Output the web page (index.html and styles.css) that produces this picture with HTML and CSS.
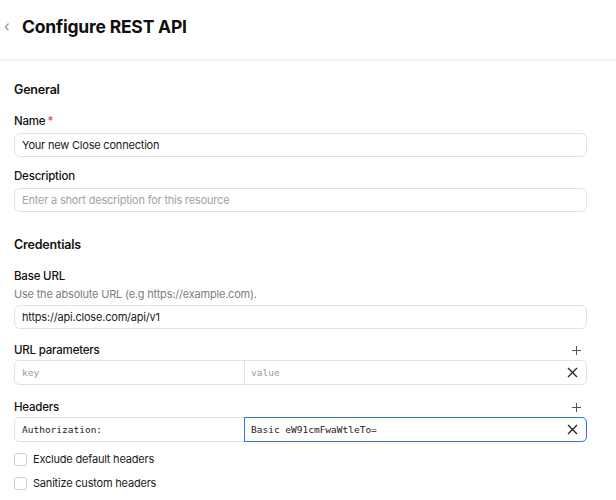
FILE: index.html
```html
<!DOCTYPE html>
<html>
<head>
<meta charset="utf-8">
<link rel="stylesheet" href="styles.css">
</head>
<body>
<header class="topbar">
  <svg class="back" width="8" height="10" viewBox="0 0 8 10"><path d="M5.5 1.5 L2.5 5 L5.5 8.5" fill="none" stroke="#9a9a9a" stroke-width="1.3"/></svg>
  <h1 class="title">Configure REST API</h1>
</header>
<main class="content">
  <section class="section">
    <h2 class="section-title">General</h2>
    <div class="field">
      <label class="label">Name<span class="req">*</span></label>
      <div class="input">Your new Close connection</div>
    </div>
    <div class="field">
      <label class="label">Description</label>
      <div class="input placeholder">Enter a short description for this resource</div>
    </div>
  </section>
  <section class="section creds">
    <h2 class="section-title">Credentials</h2>
    <div class="field">
      <label class="label tight">Base URL</label>
      <div class="help">Use the absolute URL (e.g https://example.com).</div>
      <div class="input">https://api.close.com/api/v1</div>
    </div>
    <div class="field kvfield">
      <div class="kv-head"><span class="label">URL parameters</span>
        <svg class="plus" width="9" height="9" viewBox="0 0 9 9"><path d="M4.5 0 V9 M0 4.5 H9" stroke="#555" stroke-width="1"/></svg></div>
      <div class="kv">
        <div class="kv-key mono ph">key</div>
        <div class="kv-val"><span class="mono ph">value</span>
          <svg class="x" width="11" height="11" viewBox="0 0 11 11"><path d="M1 1 L10 10 M10 1 L1 10" stroke="#222" stroke-width="1.3"/></svg></div>
      </div>
    </div>
    <div class="field kvfield last">
      <div class="kv-head"><span class="label">Headers</span>
        <svg class="plus" width="9" height="9" viewBox="0 0 9 9"><path d="M4.5 0 V9 M0 4.5 H9" stroke="#555" stroke-width="1"/></svg></div>
      <div class="kv">
        <div class="kv-key mono">Authorization:</div>
        <div class="kv-val focus"><span class="mono">Basic eW91cmFwaWtleTo=</span>
          <svg class="x" width="11" height="11" viewBox="0 0 11 11"><path d="M1 1 L10 10 M10 1 L1 10" stroke="#222" stroke-width="1.3"/></svg></div>
      </div>
    </div>
    <div class="options">
      <label class="check"><span class="box"></span>Exclude default headers</label>
      <label class="check"><span class="box"></span>Sanitize custom headers</label>
    </div>
  </section>
</main>
</body>
</html>
```
FILE: styles.css
```css
* { box-sizing: border-box; }
html, body { margin: 0; background: #fff; }
body {
  font-family: Inter, "Noto Sans", sans-serif;
  font-size: 11px;
  letter-spacing: -0.2px;
  color: #1a1a1a;
}
.topbar {
  height: 61px;
  border-bottom: 2px solid #f1f1f1;
  display: flex;
  align-items: center;
  padding: 0 0 6px 3px;
  gap: 11px;
}
.back { flex: none; }
.title {
  margin: 0;
  font-size: 17.5px;
  font-weight: 700;
  color: #0f0f0f;
  letter-spacing: -0.2px;
}
.content {
  padding: 21px 29px 0 14px;
}
.section-title {
  margin: 0 0 15px;
  font-size: 12.5px;
  line-height: 16px;
  font-weight: 600;
  color: #111;
}
.creds { margin-top: 25px; }
.field { margin-bottom: 11px; }
.label {
  display: block;
  line-height: 16px;
  font-size: 11.5px;
  font-weight: 500;
  color: #111;
  margin-bottom: 4px;
}
.label.tight { margin-bottom: 2px; }
.req { color: #e5484d; margin-left: 2px; }
.help {
  line-height: 16px;
  color: #808080;
  margin-bottom: 3px;
}
.input {
  height: 24px;
  border: 1px solid #e2e2e2;
  border-radius: 6px;
  padding: 0 7px;
  display: flex;
  align-items: center;
  color: #1a1a1a;
}
.input.placeholder { color: #a3a3a3; }
.kvfield { margin-top: 13px; margin-bottom: 14px; }
.kvfield.last { margin-bottom: 0; }
.kv-head {
  display: flex;
  justify-content: space-between;
  align-items: center;
  margin-bottom: 2px;
  padding-right: 6px;
}
.kv-head .label { margin-bottom: 0; }
.kv {
  display: flex;
  height: 25px;
  border: 1px solid #e2e2e2;
  border-radius: 5px;
}
.kv-key {
  width: 230px;
  border-right: 1px solid #e2e2e2;
  padding: 0 7px;
  display: flex;
  align-items: center;
}
.kv-val {
  flex: 1;
  display: flex;
  align-items: center;
  justify-content: space-between;
  padding: 0 8px 0 6px;
}
.kv-val.focus {
  margin: -1px;
  border: 1px solid #2f74eb;
  border-radius: 0 5px 5px 0;
}
.mono {
  font-family: "DejaVu Sans Mono", "Liberation Mono", monospace;
  font-size: 9.5px;
  letter-spacing: 0;
  color: #1a1a1a;
}
.ph { color: #9a9a9a; }
.options { margin-top: 9px; }
.check {
  display: flex;
  align-items: center;
  gap: 6px;
  height: 16px;
  margin-bottom: 8px;
  color: #1a1a1a;
}
.box {
  width: 13px;
  height: 13px;
  border: 1px solid #cfcfcf;
  border-radius: 3px;
}
```
